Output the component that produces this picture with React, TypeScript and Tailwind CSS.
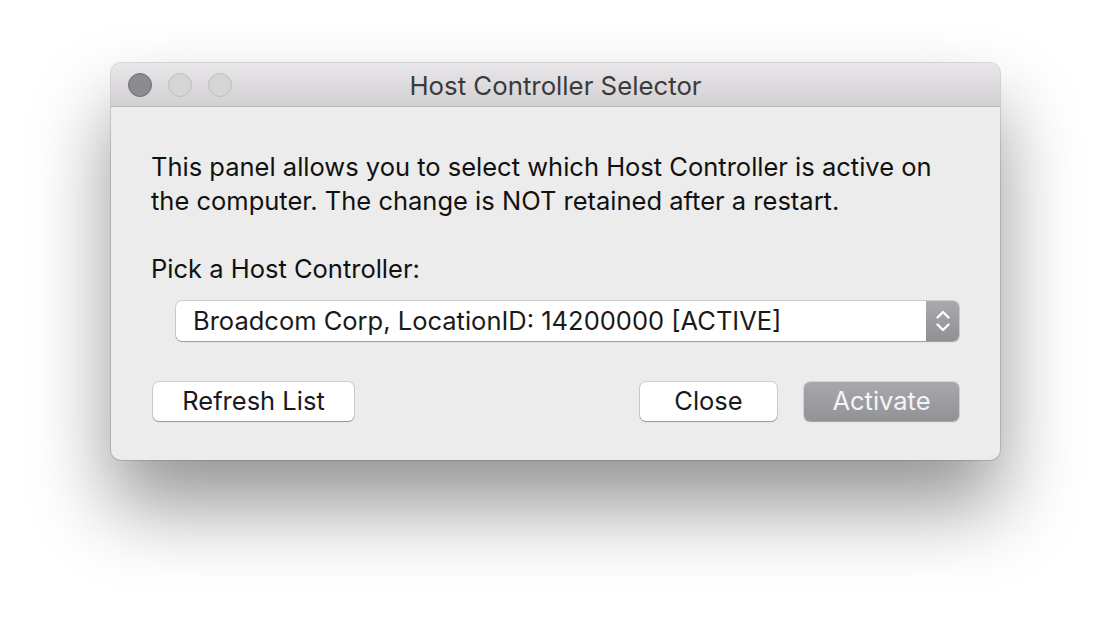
import React from "react";

function TrafficLight({ active }: { active?: boolean }) {
  return (
    <div
      className={
        active
          ? "h-6 w-6 rounded-full border border-[#6f6f73] bg-[#8c8c90]"
          : "h-6 w-6 rounded-full border border-[#bdbdbd] bg-[#d6d6d6]"
      }
    />
  );
}

function Stepper() {
  return (
    <svg width="16" height="28" viewBox="0 0 16 28" fill="none">
      <path d="M2.5 10.5 L8 5 L13.5 10.5" stroke="white" strokeWidth="2.4" strokeLinecap="round" strokeLinejoin="round" />
      <path d="M2.5 17.5 L8 23 L13.5 17.5" stroke="white" strokeWidth="2.4" strokeLinecap="round" strokeLinejoin="round" />
    </svg>
  );
}

export default function App() {
  return (
    <div
      className="h-[620px] w-[1112px] overflow-hidden bg-white pl-[111px] pt-[63px]"
      style={{ fontFamily: "Inter, 'Liberation Sans', sans-serif" }}
    >
      <div className="flex h-[397px] w-[889px] flex-col overflow-hidden rounded-[10px] bg-[#ececec] shadow-[0_46px_80px_rgba(0,0,0,0.42),0_0_0_1px_rgba(0,0,0,0.13)]">
        <div className="relative flex h-[44px] shrink-0 items-center border-b border-[#b8b8b8] bg-gradient-to-b from-[#e9e7e9] to-[#d2d0d2] px-[17px]">
          <div className="flex gap-4">
            <TrafficLight active />
            <TrafficLight />
            <TrafficLight />
          </div>
          <div className="absolute inset-0 flex items-center justify-center pt-[3px] text-[25.8px] text-[#3b3b3b]">
            Host Controller Selector
          </div>
        </div>

        <div className="flex flex-col px-[40px] pt-[43px] text-[25.5px] text-[#111]">
          <p className="leading-[34px]">
            This panel allows you to select which Host Controller is active on
            <br />
            the computer. The change is NOT retained after a restart.
          </p>
          <p className="mt-[34px] leading-[34px]">Pick a Host Controller:</p>

          <div className="ml-[25px] mt-[15px] flex h-[40px] w-[783px] items-stretch overflow-hidden rounded-[6px] bg-white shadow-[0_0_0_1px_rgba(0,0,0,0.12),0_1px_1px_rgba(0,0,0,0.25)]">
            <div className="flex flex-1 items-center pl-[17px] text-[#1a1a1a]">
              Broadcom Corp, LocationID: 14200000 [ACTIVE]
            </div>
            <div className="flex w-[33px] items-center justify-center bg-gradient-to-b from-[#aaaaae] to-[#8f8f94]">
              <Stepper />
            </div>
          </div>

          <div className="mt-[41px] flex items-center">
            <button className="ml-[2px] flex h-[39px] w-[201px] items-center justify-center rounded-[6px] bg-white text-[#1a1a1a] shadow-[0_0_0_1px_rgba(0,0,0,0.12),0_1px_1px_rgba(0,0,0,0.28)]">
              Refresh List
            </button>
            <div className="flex-1" />
            <button className="flex h-[39px] w-[137px] items-center justify-center rounded-[6px] bg-white text-[#1a1a1a] shadow-[0_0_0_1px_rgba(0,0,0,0.12),0_1px_1px_rgba(0,0,0,0.28)]">
              Close
            </button>
            <button className="ml-[27px] mr-[1px] flex h-[39px] w-[155px] items-center justify-center rounded-[6px] bg-gradient-to-b from-[#a8a8ac] to-[#939397] text-[#f4f4f4] shadow-[0_0_0_1px_rgba(0,0,0,0.1),0_1px_1px_rgba(0,0,0,0.25)]">
              Activate
            </button>
          </div>
        </div>
      </div>
    </div>
  );
}
